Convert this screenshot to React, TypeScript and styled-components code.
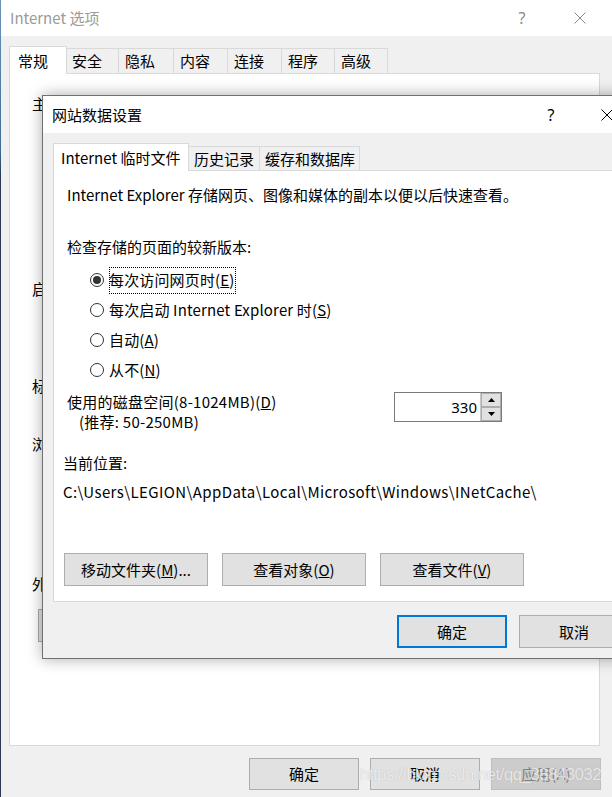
import React from "react";
import styled, { createGlobalStyle } from "styled-components";

const Global = createGlobalStyle`
  html, body { margin: 0; padding: 0; }
  body {
    width: 612px;
    height: 797px;
    overflow: hidden;
    background: linear-gradient(#6b93b8 0, #3f6c98 150px, #2b3850 176px, #2b3850 100%);
    font-family: "Noto Sans CJK SC", "Noto Sans", sans-serif;
    font-size: 15px;
    color: #000;
  }
  * { box-sizing: border-box; }
`;

const Desktop = styled.div`
  position: relative;
  width: 612px;
  height: 797px;
  padding-left: 1px;
  overflow: hidden;
`;

const OuterWindow = styled.div`
  display: flex;
  flex-direction: column;
  width: 611px;
  height: 797px;
  background: #f0f0f0;
`;

const TitleBar = styled.div<{ $h: number; $inactive?: boolean }>`
  display: flex;
  align-items: center;
  flex-shrink: 0;
  height: ${(p) => p.$h}px;
  padding-left: 9px;
  background: #fff;
  color: ${(p) => (p.$inactive ? "#9a9a9a" : "#000")};
  line-height: 20px;
`;

const TitleText = styled.span`
  flex: 1;
`;

const CaptionButton = styled.div<{ $w: number; $inactive?: boolean }>`
  display: flex;
  align-items: center;
  justify-content: center;
  width: ${(p) => p.$w}px;
  height: 100%;
  color: ${(p) => (p.$inactive ? "#8a8a8a" : "#000")};
  font-family: "Noto Sans", sans-serif;
  font-size: 16px;
`;

const CaptionGroup = styled.div<{ $pr: number }>`
  display: flex;
  height: 100%;
  padding-right: ${(p) => p.$pr}px;
`;

const WindowBody = styled.div<{ $pt: number; $pl: number; $pr: number }>`
  display: flex;
  flex-direction: column;
  flex: 1;
  padding: ${(p) => p.$pt}px ${(p) => p.$pr}px 0 ${(p) => p.$pl}px;
  background: #f0f0f0;
`;

const TabRow = styled.div<{ $h: number }>`
  display: flex;
  align-items: flex-end;
  height: ${(p) => p.$h}px;
  flex-shrink: 0;
`;

const Tab = styled.div<{ $w: number; $h: number; $pl: number; $active?: boolean }>`
  position: relative;
  display: flex;
  align-items: center;
  width: ${(p) => p.$w}px;
  height: ${(p) => p.$h}px;
  padding-left: ${(p) => p.$pl}px;
  margin-left: ${(p) => (p.$active ? 0 : -1)}px;
  margin-bottom: ${(p) => (p.$active ? -1 : 0)}px;
  border: 1px solid #d9d9d9;
  border-bottom: none;
  background: ${(p) => (p.$active ? "#fff" : "#f0f0f0")};
  z-index: ${(p) => (p.$active ? 2 : 1)};
  white-space: nowrap;
  line-height: 20px;
  &:first-child { margin-left: 0; }
`;

const Panel = styled.div<{ $w?: number; $h: number }>`
  display: flex;
  flex-direction: column;
  flex-shrink: 0;
  width: ${(p) => (p.$w ? `${p.$w}px` : "auto")};
  height: ${(p) => p.$h}px;
  border: 1px solid #d9d9d9;
  background: #fff;
  line-height: 20px;
`;

const GroupLabel = styled.div<{ $mt: number }>`
  margin-top: ${(p) => p.$mt}px;
  padding-left: 22px;
  white-space: nowrap;
`;

const ButtonRow = styled.div<{ $mt: number; $ml: number; $gap: number }>`
  display: flex;
  gap: ${(p) => p.$gap}px;
  margin-top: ${(p) => p.$mt}px;
  margin-left: ${(p) => p.$ml}px;
`;

const Footer = styled.div<{ $pt: number; $pr: number; $gap: number }>`
  display: flex;
  justify-content: flex-end;
  gap: ${(p) => p.$gap}px;
  padding-top: ${(p) => p.$pt}px;
  padding-right: ${(p) => p.$pr}px;
`;

const Button = styled.div<{ $w: number; $h: number; $primary?: boolean; $disabled?: boolean }>`
  display: flex;
  align-items: center;
  justify-content: center;
  flex-shrink: 0;
  width: ${(p) => p.$w}px;
  height: ${(p) => p.$h}px;
  background: ${(p) => (p.$disabled ? "#cccccc" : "#e1e1e1")};
  border: ${(p) => (p.$primary ? "2px solid #0078d7" : p.$disabled ? "1px solid #bfbfbf" : "1px solid #adadad")};
  color: ${(p) => (p.$disabled ? "#838383" : "#000")};
  white-space: nowrap;
  line-height: 20px;
`;

const InnerWindow = styled.div`
  position: absolute;
  left: 42px;
  top: 95px;
  width: 600px;
  height: 564px;
  display: flex;
  flex-direction: column;
  border: 1px solid #707070;
  background: #f0f0f0;
  box-shadow: 0 0 14px rgba(0, 0, 0, 0.33);
`;

const InnerPanel = styled(Panel)`
  margin-right: 9px;
  padding: 14px 0 0 13px;
`;

const TextLine = styled.div<{ $mt?: number; $ml?: number; $ls?: number }>`
  margin-top: ${(p) => p.$mt ?? 0}px;
  margin-left: ${(p) => p.$ml ?? 0}px;
  letter-spacing: ${(p) => p.$ls ?? 0}px;
  white-space: nowrap;
  height: 20px;
`;

const RadioGroup = styled.div`
  display: flex;
  flex-direction: column;
  margin-top: 8px;
  padding-left: 23px;
`;

const RadioRow = styled.div`
  display: flex;
  align-items: center;
  height: 30px;
  gap: 5px;
`;

const RadioCircle = styled.span<{ $checked?: boolean }>`
  position: relative;
  width: 14px;
  height: 14px;
  border-radius: 50%;
  border: 1px solid #333;
  background: #fff;
  flex-shrink: 0;
  &::after {
    content: "";
    display: ${(p) => (p.$checked ? "block" : "none")};
    position: absolute;
    left: 2px;
    top: 2px;
    width: 8px;
    height: 8px;
    border-radius: 50%;
    background: #333;
  }
`;

const RadioText = styled.span<{ $focused?: boolean }>`
  padding: 3px 1px 4px 0;
  outline: ${(p) => (p.$focused ? "1px dotted #000" : "none")};
  outline-offset: -1px;
  letter-spacing: 0.15px;
  white-space: nowrap;
`;

const DiskRow = styled.div`
  display: grid;
  grid-template-columns: 327px 108px;
  margin-top: 7px;
`;

const SpinBox = styled.div`
  display: flex;
  height: 30px;
  border: 1px solid #7a7a7a;
`;

const SpinValue = styled.div`
  flex: 1;
  display: flex;
  align-items: center;
  justify-content: flex-end;
  padding-right: 3px;
  font-family: "Noto Sans", sans-serif;
  font-size: 15px;
`;

const SpinButtons = styled.div`
  display: flex;
  flex-direction: column;
  width: 21px;
  border-left: 1px solid #c8c8c8;
`;

const SpinArrow = styled.div`
  flex: 1;
  display: flex;
  align-items: center;
  justify-content: center;
  background: #e1e1e1;
  border: 1px solid #adadad;
`;

const LocationBlock = styled.div`
  margin-left: -4px;
  margin-top: 21px;
`;

const Watermark = styled.div`
  position: absolute;
  left: 360px;
  top: 765px;
  font-family: "Liberation Sans", sans-serif;
  font-size: 17px;
  letter-spacing: -0.6px;
  color: rgba(255, 255, 255, 0.72);
  text-shadow: 0 0 1px rgba(90, 90, 90, 0.35);
  white-space: nowrap;
  pointer-events: none;
`;

const CloseIcon = ({ color }: { color: string }) => (
  <svg width="12" height="12" viewBox="0 0 12 12">
    <path d="M0.5 0.5 L11.5 11.5 M11.5 0.5 L0.5 11.5" stroke={color} strokeWidth="1" fill="none" />
  </svg>
);

const Arrow = ({ up }: { up?: boolean }) => (
  <svg width="7" height="4" viewBox="0 0 7 4">
    <path d={up ? "M0 4 L3.5 0 L7 4 Z" : "M0 0 L7 0 L3.5 4 Z"} fill="#000" />
  </svg>
);

const outerTabs: { label: string; w: number; pl: number; active?: boolean }[] = [
  { label: "常规", w: 58, pl: 8, active: true },
  { label: "安全", w: 53, pl: 5 },
  { label: "隐私", w: 56, pl: 6 },
  { label: "内容", w: 55, pl: 6 },
  { label: "连接", w: 55, pl: 6 },
  { label: "程序", w: 54, pl: 6 },
  { label: "高级", w: 54, pl: 6 },
];

const innerTabs: { label: string; w: number; pl: number; active?: boolean }[] = [
  { label: "Internet 临时文件", w: 136, pl: 7, active: true },
  { label: "历史记录", w: 72, pl: 5 },
  { label: "缓存和数据库", w: 101, pl: 5 },
];

export default function App() {
  return (
    <>
      <Global />
      <Desktop>
        <OuterWindow>
          <TitleBar $h={36} $inactive>
            <TitleText>Internet 选项</TitleText>
            <CaptionGroup $pr={3}>
              <CaptionButton $w={58} $inactive>?</CaptionButton>
              <CaptionButton $w={58} $inactive>
                <CloseIcon color="#8a8a8a" />
              </CaptionButton>
            </CaptionGroup>
          </TitleBar>
          <WindowBody $pt={10} $pl={8} $pr={11}>
            <TabRow $h={27}>
              {outerTabs.map((t) => (
                <Tab key={t.label} $w={t.w} $h={t.active ? 28 : 25} $pl={t.pl} $active={t.active}>
                  {t.label}
                </Tab>
              ))}
            </TabRow>
            <Panel $w={591} $h={673}>
              <GroupLabel $mt={20}>主页</GroupLabel>
              <GroupLabel $mt={165}>启动</GroupLabel>
              <GroupLabel $mt={77}>标签页</GroupLabel>
              <GroupLabel $mt={38}>浏览历史记录</GroupLabel>
              <GroupLabel $mt={120}>外观</GroupLabel>
              <ButtonRow $mt={15} $ml={28} $gap={10}>
                <Button $w={110} $h={33}>颜色(O)</Button>
                <Button $w={110} $h={33}>语言(L)</Button>
              </ButtonRow>
            </Panel>
            <Footer $pt={12} $pr={0} $gap={11}>
              <Button $w={110} $h={32}>确定</Button>
              <Button $w={110} $h={32}>取消</Button>
              <Button $w={110} $h={32} $disabled>应用(A)</Button>
            </Footer>
          </WindowBody>
        </OuterWindow>

        <InnerWindow>
          <TitleBar $h={37}>
            <TitleText>网站数据设置</TitleText>
            <CaptionGroup $pr={6}>
              <CaptionButton $w={56}>?</CaptionButton>
              <CaptionButton $w={56}>
                <CloseIcon color="#000" />
              </CaptionButton>
            </CaptionGroup>
          </TitleBar>
          <WindowBody $pt={10} $pl={10} $pr={0}>
            <TabRow $h={27}>
              {innerTabs.map((t) => (
                <Tab key={t.label} $w={t.w} $h={t.active ? 28 : 24} $pl={t.pl} $active={t.active}>
                  {t.label}
                </Tab>
              ))}
            </TabRow>
            <InnerPanel $h={432}>
              <TextLine>Internet Explorer 存储网页、图像和媒体的副本以便以后快速查看。</TextLine>
              <TextLine $mt={32}>检查存储的页面的较新版本:</TextLine>
              <RadioGroup>
                <RadioRow>
                  <RadioCircle $checked />
                  <RadioText $focused>
                    每次访问网页时(<u>E</u>)
                  </RadioText>
                </RadioRow>
                <RadioRow>
                  <RadioCircle />
                  <RadioText>
                    每次启动 Internet Explorer 时(<u>S</u>)
                  </RadioText>
                </RadioRow>
                <RadioRow>
                  <RadioCircle />
                  <RadioText>
                    自动(<u>A</u>)
                  </RadioText>
                </RadioRow>
                <RadioRow>
                  <RadioCircle />
                  <RadioText>
                    从不(<u>N</u>)
                  </RadioText>
                </RadioRow>
              </RadioGroup>
              <DiskRow>
                <div>
                  <TextLine $ls={0.25}>
                    使用的磁盘空间(8-1024MB)(<u>D</u>)
                  </TextLine>
                  <TextLine $ml={12} $ls={0.25}>(推荐: 50-250MB)</TextLine>
                </div>
                <SpinBox>
                  <SpinValue>330</SpinValue>
                  <SpinButtons>
                    <SpinArrow>
                      <Arrow up />
                    </SpinArrow>
                    <SpinArrow>
                      <Arrow />
                    </SpinArrow>
                  </SpinButtons>
                </SpinBox>
              </DiskRow>
              <LocationBlock>
                <TextLine>当前位置:</TextLine>
                <TextLine $mt={9} $ls={0.4}>
                  C:\Users\LEGION\AppData\Local\Microsoft\Windows\INetCache\
                </TextLine>
              </LocationBlock>
              <ButtonRow $mt={51} $ml={-3} $gap={14}>
                <Button $w={144} $h={33}>
                  移动文件夹(<u>M</u>)...
                </Button>
                <Button $w={144} $h={33}>
                  查看对象(<u>O</u>)
                </Button>
                <Button $w={144} $h={33}>
                  查看文件(<u>V</u>)
                </Button>
              </ButtonRow>
            </InnerPanel>
            <Footer $pt={13} $pr={12} $gap={12}>
              <Button $w={110} $h={33} $primary>确定</Button>
              <Button $w={110} $h={33}>取消</Button>
            </Footer>
          </WindowBody>
        </InnerWindow>

        <Watermark>https://blog.csdn.net/qq_38843032</Watermark>
      </Desktop>
    </>
  );
}
